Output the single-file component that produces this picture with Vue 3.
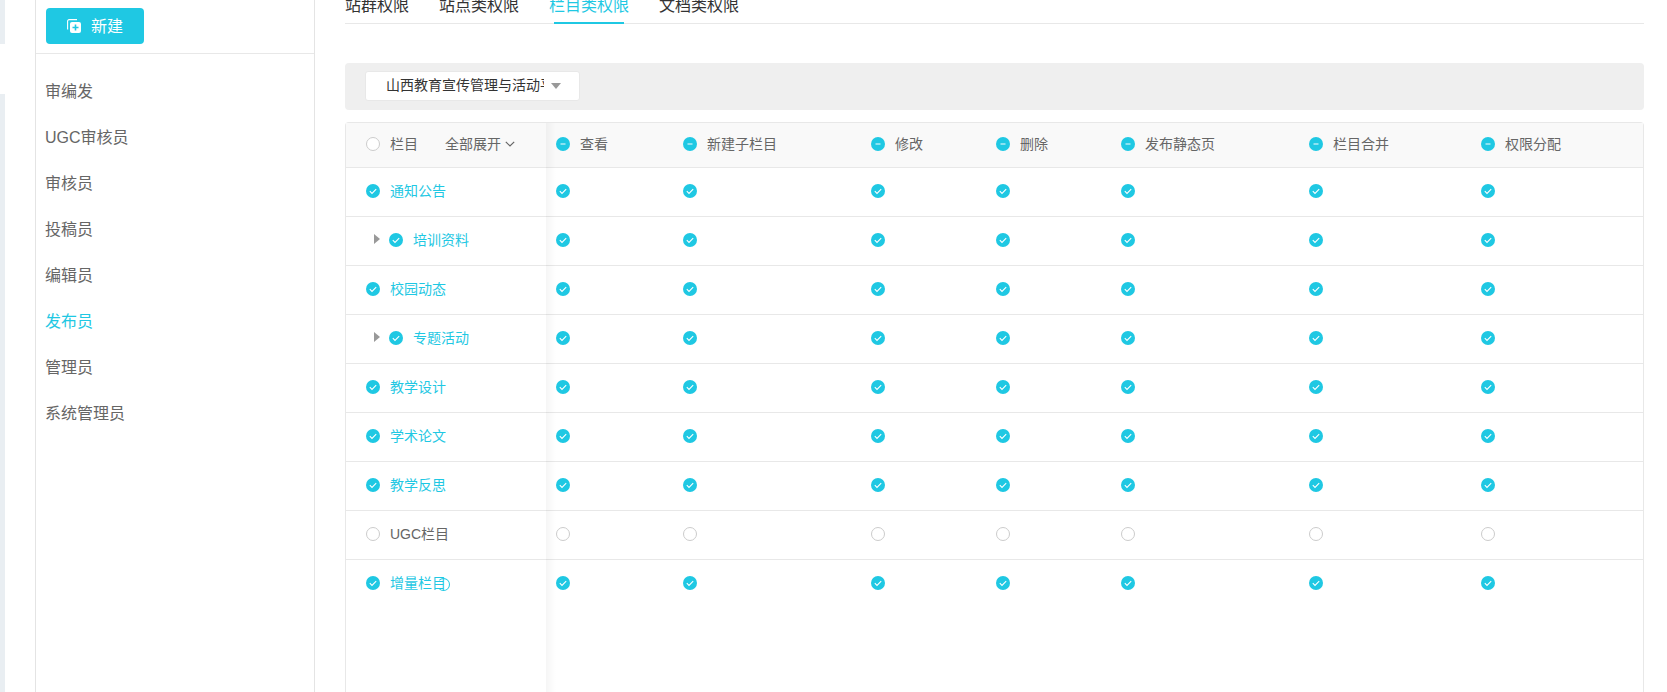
<script setup>
const menu = ['审编发', 'UGC审核员', '审核员', '投稿员', '编辑员', '发布员', '管理员', '系统管理员']
const tabs = ['站群权限', '站点类权限', '栏目类权限', '文档类权限']
const columns = ['查看', '新建子栏目', '修改', '删除', '发布静态页', '栏目合并', '权限分配']
const rows = [
  { name: '通知公告', on: true },
  { name: '培训资料', on: true, child: true },
  { name: '校园动态', on: true },
  { name: '专题活动', on: true, child: true },
  { name: '教学设计', on: true },
  { name: '学术论文', on: true },
  { name: '教学反思', on: true },
  { name: 'UGC栏目', on: false },
  { name: '增量栏目', on: true, mark: true }
]
</script>

<template>
  <div class="page">
    <div class="strip">
      <div class="strip-top"></div>
      <div class="strip-bottom"></div>
    </div>
    <aside class="side">
      <div class="side-head">
        <button class="new-btn">
          <svg class="new-icon" width="14" height="14" viewBox="0 0 14 14">
            <path d="M.6 10.5V2.1A1.5 1.5 0 0 1 2.1.6H10" fill="none" stroke="#fff" stroke-width="1.1" />
            <rect x="3" y="3" width="11" height="11" rx="2" fill="#fff" />
            <path d="M8.5 5.5v6M5.5 8.5h6" stroke="#1fc8e3" stroke-width="1.6" />
          </svg>
          <span class="new-text">新建</span>
        </button>
      </div>
      <ul class="menu">
        <li v-for="m in menu" :key="m" :class="{ active: m === '发布员' }">{{ m }}</li>
      </ul>
    </aside>
    <main class="main">
      <div class="tabs">
        <div v-for="t in tabs" :key="t" class="tab" :class="{ active: t === '栏目类权限' }">{{ t }}</div>
      </div>
      <div class="filter">
        <div class="select">
          <span class="select-text">山西教育宣传管理与活动平台</span>
          <span class="caret"></span>
        </div>
      </div>
      <div class="table">
        <div class="row head">
          <div class="first">
            <span class="radio"></span>
            <span class="label">栏目</span>
            <span class="expand">全部展开</span>
            <svg class="chev" width="10" height="6" viewBox="0 0 10 6"><path d="M.8.8L5 5l4.2-4.2" fill="none" stroke="#666" stroke-width="1.2" /></svg>
          </div>
          <div v-for="c in columns" :key="c" class="cell">
            <svg class="ic" width="14" height="14" viewBox="0 0 14 14">
              <circle cx="7" cy="7" r="7" fill="#1fc8e3" />
              <path d="M4.5 7h5" stroke="#fff" stroke-width="1.4" opacity=".7" />
            </svg>
            <span class="label">{{ c }}</span>
          </div>
        </div>
        <div v-for="r in rows" :key="r.name" class="row">
          <div class="first" :class="{ child: r.child }">
            <span v-if="r.child" class="arrow"></span>
            <svg v-if="r.on" class="ic" width="14" height="14" viewBox="0 0 14 14">
              <circle cx="7" cy="7" r="7" fill="#1fc8e3" />
              <path d="M3.8 7.2l2.2 2.2 4.2-4.2" fill="none" stroke="#fff" stroke-width="1.1" />
            </svg>
            <span v-else class="radio"></span>
            <span class="label" :class="{ on: r.on }">{{ r.name }}</span>
            <span v-if="r.mark" class="mark"></span>
          </div>
          <div v-for="c in columns" :key="c" class="cell">
            <svg v-if="r.on" class="ic" width="14" height="14" viewBox="0 0 14 14">
              <circle cx="7" cy="7" r="7" fill="#1fc8e3" />
              <path d="M3.8 7.2l2.2 2.2 4.2-4.2" fill="none" stroke="#fff" stroke-width="1.1" />
            </svg>
            <span v-else class="radio"></span>
          </div>
        </div>
        <div class="shadow"></div>
      </div>
    </main>
  </div>
</template>

<style>
html, body { margin: 0; background: #fff; overflow: hidden; }
</style>

<style scoped>
.page {
  display: flex;
  height: 692px;
  overflow: hidden;
  font-family: "Liberation Sans", "Noto Sans CJK SC", sans-serif;
  color: #666;
  background: #fff;
}
.strip { width: 5px; margin-right: 30px; flex: none; }
.strip-top { height: 44px; background: #e9eef2; }
.strip-bottom { height: 598px; margin-top: 50px; background: #e9eef2; }
.side {
  width: 280px;
  box-sizing: border-box;
  flex: none;
  border-left: 1px solid #e4e4e4;
  border-right: 1px solid #e4e4e4;
}
.side-head { height: 54px; border-bottom: 1px solid #e8e8e8; padding: 8px 0 0 10px; box-sizing: border-box; }
.new-btn {
  width: 98px;
  height: 36px;
  display: flex;
  align-items: center;
  justify-content: center;
  gap: 10px;
  border: 0;
  border-radius: 4px;
  background: #1fc8e3;
  color: #fff;
  font: 16px/20px "Liberation Sans", "Noto Sans CJK SC", sans-serif;
  padding: 0;
}
.new-text { padding-top: 2px; }
.menu { list-style: none; margin: 15px 0 0; padding: 0 0 0 9px; font-size: 16px; }
.menu li { height: 46px; line-height: 46px; }
.menu li.active { color: #1fc8e3; }
.main { width: 1299px; margin-left: 30px; flex: none; }
.tabs {
  display: flex;
  gap: 30px;
  height: 24px;
  box-sizing: border-box;
  border-bottom: 1px solid #e8e8e8;
  font-size: 16px;
  color: #333;
  line-height: 12px;
}
.tab { position: relative; height: 23px; }
.tab.active { color: #1fc8e3; }
.tab.active::after {
  content: "";
  position: absolute;
  left: 5px;
  right: 5px;
  bottom: -1px;
  height: 2px;
  background: #1fc8e3;
}
.filter {
  height: 47px;
  margin-top: 39px;
  background: #efefef;
  border-radius: 4px;
  display: flex;
  align-items: flex-start;
  padding: 8px 0 0 20px;
  box-sizing: border-box;
}
.select {
  width: 215px;
  height: 30px;
  background: #fff;
  border: 1px solid #e8e8e8;
  border-radius: 3px;
  display: flex;
  align-items: center;
  padding-left: 20px;
  box-sizing: border-box;
  font-size: 14px;
  line-height: 20px;
  color: #333;
}
.select-text { width: 158px; overflow: hidden; white-space: nowrap; margin-bottom: 3px; }
.caret {
  margin-left: 7px;
  border-left: 5px solid transparent;
  border-right: 5px solid transparent;
  border-top: 6px solid #999;
}
.table {
  position: relative;
  height: 570px;
  margin-top: 12px;
  box-sizing: border-box;
  border: 1px solid #e8e8e8;
  border-bottom: 0;
  border-radius: 4px 4px 0 0;
  font-size: 14px;
  line-height: 20px;
}
.row {
  display: grid;
  grid-template-columns: 200px 127px 188px 125px 125px 188px 172px 1fr;
  height: 49px;
  box-sizing: border-box;
  padding-bottom: 2px;
  border-bottom: 1px solid #e8e8e8;
  align-items: center;
}
.row:nth-last-child(2) { border-bottom-color: transparent; }
.row.head { height: 45px; padding-bottom: 2px; background: #f9f9f9; }
.first { display: flex; align-items: center; padding-left: 20px; position: relative; }
.first.child { padding-left: 43px; }
.cell { display: flex; align-items: center; padding-left: 10px; }
.ic { flex: none; }
.radio {
  width: 14px;
  height: 14px;
  box-sizing: border-box;
  border: 1px solid #ccc;
  border-radius: 50%;
  background: #fff;
  flex: none;
}
.label { margin-left: 10px; white-space: nowrap; }
.label.on { color: #1fc8e3; }
.expand { margin-left: 27px; white-space: nowrap; }
.chev { margin-left: 4px; }
.arrow {
  position: absolute;
  left: 28px;
  top: 4px;
  border-top: 5px solid transparent;
  border-bottom: 5px solid transparent;
  border-left: 6px solid #999;
}
.mark {
  width: 13px;
  height: 13px;
  margin-left: -9px;
  margin-top: 2px;
  flex: none;
  box-sizing: border-box;
  border: 1px solid #1fc8e3;
  border-left-color: transparent;
  border-radius: 50%;
}
.shadow {
  position: absolute;
  left: 200px;
  top: 0;
  bottom: 0;
  width: 10px;
  background: linear-gradient(to right, rgba(0, 0, 0, .04), rgba(0, 0, 0, 0));
  pointer-events: none;
}
</style>
